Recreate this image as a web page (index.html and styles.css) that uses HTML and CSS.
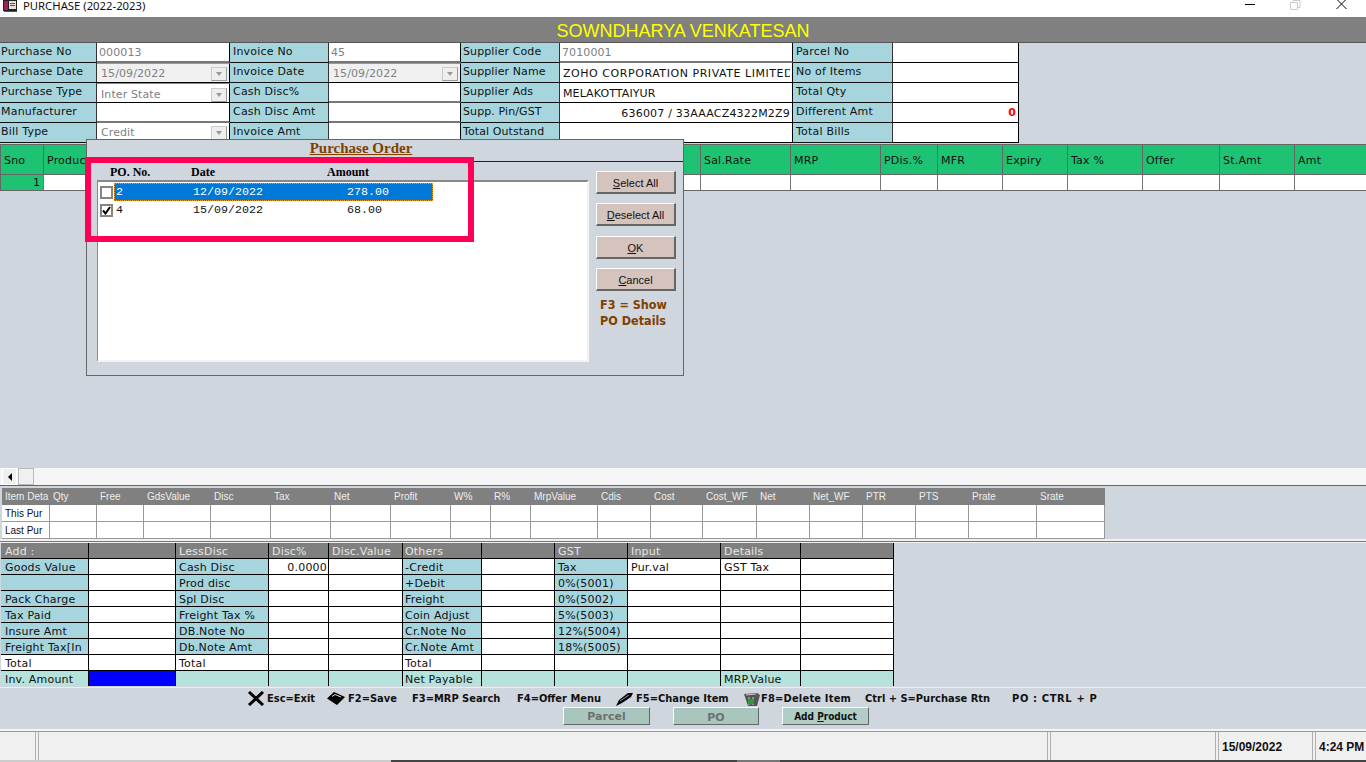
FILE: index.html
```html
<!DOCTYPE html>
<html lang="en">
<head>
<meta charset="utf-8">
<title>PURCHASE (2022-2023)</title>
<link rel="stylesheet" href="styles.css">
</head>
<body>
<div class="window">
  <div class="titlebar">
    <svg class="app-icon" width="16" height="13" viewBox="0 0 16 13"><rect x="1" y="0" width="14" height="11" fill="#222"/><rect x="2" y="1" width="4" height="9" fill="#a0205a"/><rect x="7" y="1" width="7" height="8" fill="#e8e0d8"/><rect x="8" y="3" width="5" height="1" fill="#555"/><rect x="8" y="5" width="5" height="1" fill="#555"/><rect x="2" y="11" width="13" height="1" fill="#555"/></svg>
    <span class="title-text">PURCHASE (2022-2023)</span>
    <div class="win-controls">
      <svg width="11" height="10" viewBox="0 0 11 10"><path d="M0 4.5H10" stroke="#000" fill="none"/></svg>
      <svg width="11" height="10" viewBox="0 0 11 10"><path d="M.5 2.5h7v7h-7zM3 2V.5h7v7H8" stroke="#ccc" fill="none"/></svg>
      <svg width="11" height="10" viewBox="0 0 11 10"><path d="M.5 -1L10.5 9M10.5 -1L.5 9" stroke="#000" fill="none"/></svg>
    </div>
  </div>

  <div class="banner">SOWNDHARYA VENKATESAN</div>

  <div class="form">
    <div class="lbl">Purchase No</div><div class="inp sunken gray">000013</div>
    <div class="lbl">Invoice No</div><div class="inp sunken gray">45</div>
    <div class="lbl">Supplier Code</div><div class="inp sunken gray">7010001</div>
    <div class="lbl">Parcel No</div><div class="inp"></div>

    <div class="lbl">Purchase Date</div><div class="inp combo off"><span>15/09/2022</span><i class="arrow"></i></div>
    <div class="lbl">Invoice Date</div><div class="inp combo off"><span>15/09/2022</span><i class="arrow"></i></div>
    <div class="lbl">Supplier Name</div><div class="inp clip wide"><span class="cut">ZOHO CORPORATION PRIVATE LIMITED</span></div>
    <div class="lbl">No of Items</div><div class="inp"></div>

    <div class="lbl">Purchase Type</div><div class="inp combo tall"><span>Inter State</span><i class="arrow"></i></div>
    <div class="lbl">Cash Disc%</div><div class="inp sunken"></div>
    <div class="lbl">Supplier Ads</div><div class="inp clip">MELAKOTTAIYUR</div>
    <div class="lbl">Total Qty</div><div class="inp"></div>

    <div class="lbl">Manufacturer</div><div class="inp sunken"></div>
    <div class="lbl">Cash Disc Amt</div><div class="inp sunken"></div>
    <div class="lbl">Supp. Pin/GST</div><div class="inp right">636007 / 33AAACZ4322M2Z9</div>
    <div class="lbl">Different Amt</div><div class="inp right red">0</div>

    <div class="lbl">Bill Type</div><div class="inp combo raised"><span>Credit</span><i class="arrow"></i></div>
    <div class="lbl">Invoice Amt</div><div class="inp sunken"></div>
    <div class="lbl">Total Outstand</div><div class="inp"></div>
    <div class="lbl">Total Bills</div><div class="inp"></div>
  </div>

  <div class="grid-head">
    <div>Sno</div><div>Product</div><div>Sal.Rate</div><div>MRP</div><div>PDis.%</div><div>MFR</div><div>Expiry</div><div>Tax %</div><div>Offer</div><div>St.Amt</div><div>Amt</div>
  </div>
  <div class="grid-row">
    <div class="sno">1</div><div></div><div></div><div></div><div></div><div></div><div></div><div></div><div></div><div></div><div></div>
  </div>

  <div class="main-space"></div>

  <div class="hscroll">
    <div class="sb-btn"><i class="sb-left"></i></div>
    <div class="sb-thumb"></div>
  </div>

  <div class="item-panel">
    <div class="item-grid item-head">
      <div>Item Deta</div><div>Qty</div><div>Free</div><div>GdsValue</div><div>Disc</div><div>Tax</div><div>Net</div><div>Profit</div><div>W%</div><div>R%</div><div>MrpValue</div><div>Cdis</div><div>Cost</div><div>Cost_WF</div><div>Net</div><div>Net_WF</div><div>PTR</div><div>PTS</div><div>Prate</div><div>Srate</div>
    </div>
    <div class="item-grid item-row">
      <div>This Pur</div><div></div><div></div><div></div><div></div><div></div><div></div><div></div><div></div><div></div><div></div><div></div><div></div><div></div><div></div><div></div><div></div><div></div><div></div><div></div>
    </div>
    <div class="item-grid item-row">
      <div>Last Pur</div><div></div><div></div><div></div><div></div><div></div><div></div><div></div><div></div><div></div><div></div><div></div><div></div><div></div><div></div><div></div><div></div><div></div><div></div><div></div>
    </div>
  </div>

  <div class="strip"></div>

  <div class="summary">
    <div class="h">Add :</div><div class="h"></div><div class="h">LessDisc</div><div class="h">Disc%</div><div class="h">Disc.Value</div><div class="h">Others</div><div class="h"></div><div class="h">GST</div><div class="h">Input</div><div class="h">Details</div><div class="h"></div>

    <div class="l">Goods Value</div><div></div><div class="l">Cash Disc</div><div class="num">0.0000</div><div></div><div class="l">-Credit</div><div></div><div class="l">Tax</div><div>Pur.val</div><div>GST Tax</div><div></div>

    <div class="l"></div><div></div><div class="l">Prod disc</div><div></div><div></div><div class="l">+Debit</div><div></div><div class="l">0%(5001)</div><div></div><div></div><div></div>

    <div class="l">Pack Charge</div><div></div><div class="l">Spl Disc</div><div></div><div></div><div class="l">Freight</div><div></div><div class="l">0%(5002)</div><div></div><div></div><div></div>

    <div class="l">Tax Paid</div><div></div><div class="l">Freight Tax %</div><div></div><div></div><div class="l">Coin Adjust</div><div></div><div class="l">5%(5003)</div><div></div><div></div><div></div>

    <div class="l">Insure Amt</div><div></div><div class="l">DB.Note No</div><div></div><div></div><div class="l">Cr.Note No</div><div></div><div class="l">12%(5004)</div><div></div><div></div><div></div>

    <div class="l">Freight Tax[In</div><div></div><div class="l">Db.Note Amt</div><div></div><div></div><div class="l">Cr.Note Amt</div><div></div><div class="l">18%(5005)</div><div></div><div></div><div></div>

    <div>Total</div><div></div><div>Total</div><div></div><div></div><div>Total</div><div></div><div></div><div></div><div></div><div></div>

    <div class="p">Inv. Amount</div><div class="blue"></div><div class="p"></div><div class="p"></div><div class="p"></div><div class="p">Net Payable</div><div class="p"></div><div class="p"></div><div class="p"></div><div class="p">MRP.Value</div><div class="p"></div>
  </div>

  <div class="footer">
    <div class="keys">
      <span class="key"><svg width="18" height="15" viewBox="0 0 18 15"><path d="M2 1L16 14M16 1L2 14" stroke="#000" stroke-width="3" fill="none"/></svg>Esc=Exit</span>
      <span class="key"><svg width="18" height="13" viewBox="0 0 18 13"><path d="M0 6.5L7 0L18 5L10 13Z" fill="#000"/><path d="M5 4.5L8 2.5L14 5" stroke="#ddd" fill="none"/></svg><em class="after-icon">F2=Save</em></span>
      <span class="key">F3=MRP Search</span>
      <span class="key">F4=Offer Menu</span>
      <span class="key"><svg width="18" height="14" viewBox="0 0 18 14"><path d="M0 14L3 8L12 1L17 1L15 5L6 11Z" fill="#000"/><path d="M4 9L13 3" stroke="#999" fill="none"/></svg>F5=Change Item</span>
      <span class="key tight"><svg width="18" height="14" viewBox="0 0 18 14"><path d="M1 2L14 1L17 3L14 14H5Z" fill="#555"/><path d="M3 3l10-1M6 5v8M10 5v8" stroke="#ccc" fill="none"/><rect x="5" y="7" width="6" height="5" fill="#2a9a3a"/></svg>F8=Delete Item</span>
      <span class="key">Ctrl + S=Purchase Rtn</span>
      <span class="key spaced">PO : CTRL + P</span>
    </div>
    <div class="actions">
      <button class="act off" type="button">Parcel</button>
      <button class="act off" type="button">PO</button>
      <button class="act" type="button">Add <u>P</u>roduct</button>
    </div>
  </div>

  <div class="strip2"></div>

  <div class="status">
    <div></div><div></div><div></div><div>15/09/2022</div><div>4:24 PM</div>
  </div>
  <div class="taskedge"></div>

  <div class="dialog">
    <div class="dlg-title"><span>Purchase Order</span></div>
    <div class="dlg-body">
      <div class="dlg-left">
        <div class="po-head"><span>PO. No.</span><span>Date</span><span>Amount</span></div>
        <div class="po-list">
          <div class="po-row selected">
            <i class="check"></i>
            <div class="po-text"><span>2</span><span>12/09/2022</span><span>278.00</span></div>
          </div>
          <div class="po-row">
            <i class="check"><svg width="9" height="9" viewBox="0 0 9 9"><path d="M1 4.5L3.5 7.5L8 1" stroke="#000" stroke-width="2" fill="none"/></svg></i>
            <div class="po-text"><span>4</span><span>15/09/2022</span><span>68.00</span></div>
          </div>
        </div>
      </div>
      <div class="dlg-right">
        <button class="dlg-btn" type="button"><u>S</u>elect All</button>
        <button class="dlg-btn" type="button"><u>D</u>eselect All</button>
        <button class="dlg-btn" type="button"><u>O</u>K</button>
        <button class="dlg-btn" type="button"><u>C</u>ancel</button>
        <div class="hint">F3 = Show<br>PO Details</div>
      </div>
    </div>
  </div>
  <div class="highlight"></div>
</div>
</body>
</html>
```
FILE: styles.css
```css
* { box-sizing: border-box; }
html, body { margin: 0; padding: 0; }
body { background: #d0d6de; overflow: hidden; }

.window {
  position: relative;
  width: 1366px;
  height: 762px;
  display: flex;
  flex-direction: column;
  background: #d0d6de;
  font-family: "DejaVu Sans", Verdana, sans-serif;
  font-size: 11px;
  line-height: 14px;
  color: #111;
  overflow: hidden;
}

/* title bar */
.titlebar {
  height: 17px;
  flex: none;
  background: #fff;
  display: flex;
  align-items: flex-start;
  padding-left: 2px;
}
.app-icon { margin-right: 5px; display: block; }
.title-text {
  font-family: "Noto Sans", sans-serif;
  font-size: 11.3px;
  line-height: 12px;
  color: #111;
}
.win-controls {
  margin-left: auto;
  display: grid;
  grid-template-columns: 45px 46px 30px;
}
.win-controls svg { display: block; }

/* banner */
.banner {
  height: 26px;
  flex: none;
  background: #808080;
  border-bottom: 1px solid #555;
  color: #ffff00;
  font-family: "Liberation Sans", Arial, sans-serif;
  font-size: 18px;
  line-height: 29px;
  text-align: center;
}

/* header form */
.form {
  flex: none;
  display: grid;
  grid-template-columns: 97px 133px 99px 132px 99px 233px 100px 126px;
  grid-auto-rows: 20px;
  width: 1019px;
  margin-bottom: 1px;
}
.lbl {
  background: #a6d5de;
  border-right: 1px solid #333;
  border-bottom: 1px solid #111;
  padding: 2px 0 0 3px;
  white-space: nowrap;
  overflow: hidden;
  letter-spacing: 0.2px;
}
.lbl:nth-child(8n+1) { padding-left: 1px; }
.lbl:nth-child(8n+5) { padding-left: 2px; letter-spacing: 0.1px; }
.inp {
  background: #fff;
  border-right: 1px solid #000;
  border-bottom: 1px solid #000;
  padding: 3px 2px 0 3px;
  white-space: nowrap;
  overflow: hidden;
  letter-spacing: 0.1px;
}
.inp.sunken { border-bottom: 2px solid #777; padding-left: 2px; }
.inp.gray { color: #808080; }
.inp.clip { padding-left: 3px; padding-top: 4px; }
.inp.wide { letter-spacing: 0.55px; }
.cut { display: block; overflow: hidden; width: 227px; }
.inp.right { text-align: right; padding-top: 4px; letter-spacing: 0.2px; }
.inp.red { color: #ff0000; font-weight: bold; padding-top: 3px; }
.combo {
  display: flex;
  align-items: center;
  justify-content: space-between;
  padding: 2px 2px 0 4px;
  color: #808080;
  border-bottom: 1px solid #000;
}
.combo.off { background: #f0f0f0; border-top: 1px solid #999; }
.combo.tall { padding-top: 3px; border-top: 1px solid #888; }
.combo.raised { padding-top: 0; }
.arrow {
  width: 16px;
  height: 14px;
  background: #eee;
  border: 1px solid #ccc;
  border-right-color: #999;
  border-bottom-color: #999;
  position: relative;
  flex: none;
}
.arrow::after {
  content: "";
  position: absolute;
  left: 4px;
  top: 4px;
  border-left: 3px solid transparent;
  border-right: 3px solid transparent;
  border-top: 4px solid #999;
}

/* item grid */
.grid-head, .grid-row {
  flex: none;
  display: grid;
  grid-template-columns: 44px 657px 90px 90px 57px 65px 65px 75px 77px 75px 71px;
}
.grid-head {
  height: 31px;
  background: #1dc272;
  border-top: 1px solid #666;
  border-bottom: 1px solid #666;
  letter-spacing: 0.2px;
}
.grid-head > div {
  border-right: 1px solid #666;
  padding: 9px 0 0 3px;
}
.grid-head > div:first-child { border-left: 1px solid #666; }
.grid-head > div:last-child { border-right: 0; }
.grid-row {
  height: 16px;
  background: #fff;
  border-bottom: 1px solid #666;
}
.grid-row > div { border-right: 1px solid #777; }
.grid-row > div:last-child { border-right: 0; }
.grid-row .sno {
  background: #1dc272;
  border-left: 1px solid #666;
  text-align: right;
  padding: 1px 3px 0 0;
}

.main-space { flex: 1; }

/* scrollbar */
.hscroll {
  height: 17px;
  flex: none;
  background: #f5f5f5;
  display: flex;
  padding-left: 2px;
}
.sb-btn {
  width: 15px;
  background: #f0f0f0;
  border: 1px solid #fff;
  display: flex;
  align-items: center;
  justify-content: center;
}
.sb-left {
  border-top: 4px solid transparent;
  border-bottom: 4px solid transparent;
  border-right: 4px solid #000;
}
.sb-thumb {
  width: 16px;
  margin-left: 1px;
  background: #f0f0f0;
  border: 1px solid #bbb;
}

/* item details */
.item-panel {
  flex: none;
  height: 54px;
  border-top: 1px solid #666;
  padding: 2px 0 0 2px;
}
.item-grid {
  display: grid;
  width: 1103px;
  grid-template-columns: 48px 47px 47px 67px 60px 60px 60px 60px 40px 40px 67px 53px 52px 54px 53px 53px 53px 53px 68px 68px;
}
.item-head {
  height: 17px;
  background: #808080;
  color: #eee;
  font-family: "Liberation Sans", Arial, sans-serif;
  font-size: 10px;
  line-height: 17px;
}
.item-head > div { padding-left: 3px; white-space: nowrap; overflow: hidden; }
.item-row {
  height: 17px;
  background: #fff;
  font-family: "Liberation Sans", Arial, sans-serif;
  font-size: 10px;
  line-height: 16px;
}
.item-row > div {
  border-right: 1px solid #999;
  border-bottom: 1px solid #999;
  padding: 1px 0 0 3px;
  white-space: nowrap;
  overflow: hidden;
}

.strip {
  height: 4px;
  flex: none;
  background: linear-gradient(#f0f0f0 0 2px, #777 2px 3px, #f0f0f0 3px);
}

/* summary table */
.summary {
  flex: none;
  display: grid;
  width: 894px;
  height: 143px;
  margin-left: 1px;
  grid-template-columns: 88px 87px 93px 60px 74px 79px 73px 73px 93px 80px 93px;
  grid-template-rows: 16px repeat(7, 16px) 15px;
  letter-spacing: 0.2px;
}
.summary > div {
  background: #fff;
  border-right: 1px solid #000;
  border-bottom: 1px solid #000;
  padding: 2px 0 0 3px;
  white-space: nowrap;
  overflow: hidden;
}
.summary > div:nth-child(11n+1) { padding-left: 4px; }
.summary > div:nth-child(11n+6) { padding-left: 2px; }
.summary > .h { background: #808080; color: #e6e6e6; }
.summary > .l { background: #a6d5de; }
.summary > .p { background: #b5e2da; border-bottom: 0; }
.summary > .blue { background: #0000ff; border-bottom: 0; }
.summary > .num { text-align: right; padding-right: 1px; }

/* footer */
.footer {
  flex: none;
  height: 42px;
  margin-top: 1px;
  border-top: 1px solid #eee;
  padding-top: 2px;
}
.keys {
  display: grid;
  grid-template-columns: 80px 85px 105px 99px 127px 122px 147px 1fr;
  padding-left: 247px;
  height: 17px;
  font-family: "DejaVu Sans Condensed", "DejaVu Sans", sans-serif;
  font-weight: bold;
  font-size: 11px;
  line-height: 15px;
  color: #111;
}
.key { display: flex; align-items: center; white-space: nowrap; }
.key svg { flex: none; margin-right: 2px; }
.key.tight { letter-spacing: 0.2px; }
.key.tight svg { margin-right: 0; }
.key.spaced { letter-spacing: 0.65px; }
.after-icon { font-style: normal; margin-left: 1px; }
.actions {
  display: flex;
  gap: 23px;
  padding-left: 563px;
}
.act {
  width: 87px;
  height: 18px;
  padding: 0;
  background: #b0cec6;
  border: 1px solid;
  border-color: #fff #666 #666 #fff;
  font-family: "DejaVu Sans Condensed", "DejaVu Sans", sans-serif;
  font-weight: bold;
  font-size: 10px;
  color: #111;
}
.act.off {
  background: #a9c6be;
  color: #6e7070;
  font-family: "DejaVu Sans", sans-serif;
  font-size: 11px;
  padding-top: 1px;
}
.act:nth-child(2) { width: 86px; padding-top: 2px; }

.strip2 {
  height: 3px;
  flex: none;
  background: linear-gradient(#f5f5f5 0 2px, #999 2px);
}

/* status bar */
.status {
  flex: none;
  height: 28px;
  background: #f0f0f0;
  display: grid;
  grid-template-columns: 37px 1012px 168px 97px 52px;
  font-family: "Liberation Sans", Arial, sans-serif;
  font-weight: bold;
  font-size: 12px;
  line-height: 30px;
}
.status > div {
  margin: 0 1px;
  border-left: 1px solid #b0b0b0;
  border-right: 1px solid #b0b0b0;
  padding-left: 3px;
  white-space: nowrap;
}
.status > div:first-child { border-left: 0; margin-left: 0; }
.status > div:last-child { border-right: 0; margin-right: 0; }
.taskedge {
  flex: none;
  height: 2px;
  background: linear-gradient(to right, #ccc 391px, #444 391px 737px, #777 737px 780px, #444 780px);
}

/* dialog */
.dialog {
  position: absolute;
  left: 86px;
  top: 139px;
  width: 598px;
  height: 237px;
  background: #d0d6de;
  border: 1px solid #666;
  display: flex;
  flex-direction: column;
}
.dlg-title {
  height: 22px;
  flex: none;
  border-bottom: 1px solid #222;
  text-align: center;
  padding-right: 48px;
  font-family: "Liberation Serif", serif;
  font-weight: bold;
  font-size: 15px;
  line-height: 17px;
  color: #804000;
}
.dlg-title span { text-decoration: underline; }
.dlg-body { flex: 1; display: flex; }
.dlg-left { width: 509px; padding: 0 0 0 10px; flex: none; }
.po-head {
  height: 18px;
  display: grid;
  grid-template-columns: 81px 136px 100px;
  padding-left: 13px;
  font-family: "Liberation Serif", serif;
  font-weight: bold;
  font-size: 12px;
  line-height: 20px;
  color: #000;
}
.po-list {
  width: 492px;
  height: 182px;
  background: #fff;
  border: 1px solid;
  border-color: #888 #f4f4f4 #f4f4f4 #888;
  border-width: 2px 2px 2px 1px;
  padding-top: 1px;
}
.po-row { height: 18px; display: flex; align-items: center; padding-left: 2px; }
.check {
  width: 13px;
  height: 13px;
  border: 2px solid #858585;
  background: #fff;
  margin: 0 1px 0 0;
  flex: none;
  display: flex;
  align-items: center;
  justify-content: center;
}
.po-text {
  width: 319px;
  height: 18px;
  display: grid;
  grid-template-columns: 77px 154px 1fr;
  padding-left: 2px;
  font-family: "Liberation Mono", monospace;
  font-size: 11.67px;
  line-height: 19px;
}
.selected .po-text {
  background: #0078d7;
  color: #fff;
  outline: 1px dotted #f59a23;
  outline-offset: -1px;
}
.dlg-right { padding: 9px 0 0 0; display: flex; flex-direction: column; }
.dlg-btn {
  width: 80px;
  height: 23px;
  margin-bottom: 9px;
  padding: 1px 0 0;
  background: #d5c3be;
  border: 1px solid;
  border-color: #fff #666 #666 #fff;
  border-width: 1px 2px 2px 1px;
  font-family: "Liberation Sans", Arial, sans-serif;
  font-size: 11px;
  color: #111;
}
.dlg-btn:nth-child(2) { margin-bottom: 10px; }
.hint {
  padding: 0 0 0 4px;
  font-family: "DejaVu Sans Condensed", "DejaVu Sans", sans-serif;
  font-weight: bold;
  font-size: 12.5px;
  line-height: 16px;
  color: #804000;
  margin-top: -3px;
}

/* annotation box */
.highlight {
  position: absolute;
  left: 85px;
  top: 157px;
  width: 389px;
  height: 85px;
  border: 6px solid #ff0055;
}
```
